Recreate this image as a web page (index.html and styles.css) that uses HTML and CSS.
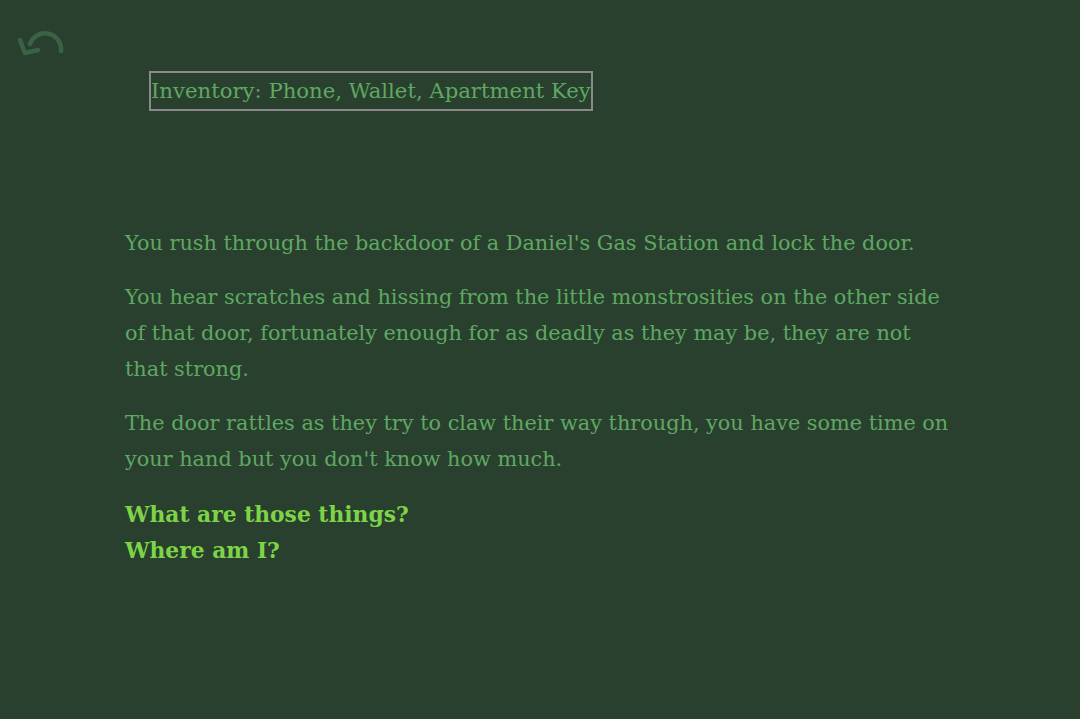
FILE: index.html
```html
<!DOCTYPE html>
<html>
<head>
<meta charset="utf-8">
<link rel="stylesheet" href="styles.css">
</head>
<body>
<div class="page">
  <div class="topbar">
    <button class="undo" aria-label="Undo">
      <svg width="54" height="34" viewBox="14 26 54 34">
        <path d="M61 51 A16 16 0 0 0 30 44" fill="none" stroke="currentColor" stroke-width="4.5" stroke-linecap="round"/>
        <path d="M20 40 L25 53 L38 50" fill="none" stroke="currentColor" stroke-width="4.5" stroke-linecap="round" stroke-linejoin="round"/>
      </svg>
    </button>
  </div>
  <div class="inventory-row">
    <span class="inventory">Inventory: Phone, Wallet, Apartment Key</span>
  </div>
  <div class="story">
    <p>You rush through the backdoor of a Daniel's Gas Station and lock the door.</p>
    <p>You hear scratches and hissing from the little monstrosities on the other side of that door, fortunately enough for as deadly as they may be, they are not that strong.</p>
    <p>The door rattles as they try to claw their way through, you have some time on your hand but you don't know how much.</p>
    <div class="choices">
      <a class="choice">What are those things?</a>
      <a class="choice">Where am I?</a>
    </div>
  </div>
</div>
</body>
</html>
```
FILE: styles.css
```css
html, body {
  margin: 0;
  padding: 0;
  background: #29402e;
  height: 100%;
}
body {
  font-family: "DejaVu Serif", "Liberation Serif", serif;
  color: #5fa862;
}
.topbar {
  height: 71px;
  padding: 26px 0 0 14px;
  box-sizing: border-box;
}
.undo {
  background: none;
  border: 0;
  padding: 0;
  color: #3a6244;
  display: block;
  cursor: pointer;
}
.undo svg { display: block; }
.inventory-row {
  padding-left: 149px;
  height: 154px;
}
.inventory {
  display: inline-block;
  border: 2px solid #8a8a8a;
  font-size: 21.2px;
  line-height: 36px;
}
.story {
  padding-left: 125px;
  width: 828px;
  font-size: 20.8px;
  line-height: 36px;
}
.story p {
  margin: 0 0 18px 0;
}
.choices {
  display: flex;
  flex-direction: column;
  align-items: flex-start;
  padding-top: 2px;
}
.choice {
  font-weight: bold;
  font-size: 21.8px;
  color: #7ed447;
  cursor: pointer;
}
```
